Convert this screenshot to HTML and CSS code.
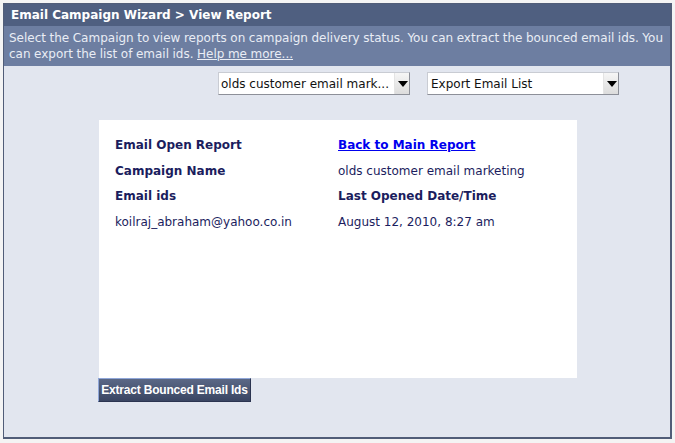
FILE: index.html
```html
<!DOCTYPE html>
<html lang="en">
<head>
    <meta charset="UTF-8">
    <title>Email Campaign Wizard - View Report</title>
    <link rel="stylesheet" href="styles.css">
</head>
<body>
    <div class="wizard">
        <!-- Title bar -->
        <div class="wizard-title">Email Campaign Wizard &gt; View Report</div>
        <div class="wizard-help">
            Select the Campaign to view reports on campaign delivery status. You can extract the bounced email ids. You can export the list of email ids. <a href="javascript:void(0)">Help me more...</a>
        </div>

        <div class="wizard-body">
            <div class="toolbar">
                <div class="select select-campaign">
                    <span>olds customer email mark...</span>
                    <span class="arrow"></span>
                </div>
                <div class="select select-export">
                    <span>Export Email List</span>
                    <span class="arrow"></span>
                </div>
            </div>

            <div class="report-panel">
                <div class="report-grid">
                    <div class="label">Email Open Report</div>
                    <div><a class="back-link" href="javascript:void(0)">Back to Main Report</a></div>
                    <div class="label">Campaign Name</div>
                    <div>olds customer email marketing</div>
                    <div class="label">Email ids</div>
                    <div class="label">Last Opened Date/Time</div>
                    <div>koilraj_abraham@yahoo.co.in</div>
                    <div>August 12, 2010, 8:27 am</div>
                </div>
            </div>
            <button class="extract-btn">Extract Bounced Email Ids</button>
        </div>
    </div>
</body>
</html>
```

FILE: styles.css
```css
* {
    box-sizing: border-box;
    margin: 0;
    padding: 0;
}

body {
    font-family: 'DejaVu Sans', Verdana, sans-serif;
    font-size: 12px;
    background-color: #f4f4f4;
    padding: 3px 3px 4px 3px;
}

.wizard {
    width: 669px;
    height: 436px;
    border: 1px solid #515d78;
    border-right-width: 2px;
    border-bottom-width: 2px;
    background-color: #e2e6ef;
    display: flex;
    flex-direction: column;
}

.wizard-title {
    background-color: #4f5f80;
    color: #fff;
    font-weight: bold;
    font-size: 12px;
    height: 22px;
    line-height: 22px;
    padding-left: 7px;
}

.wizard-help {
    background-color: #6d7ea1;
    color: #e9edf5;
    font-size: 12px;
    line-height: 16px;
    height: 40px;
    padding: 4px 4px 0 5px;
    word-spacing: -0.3px;
}

.wizard-help a {
    color: #e9edf5;
}

.wizard-body {
    flex: 1;
    padding: 6px 0 0 94px;
}

.toolbar {
    display: flex;
    gap: 17px;
    padding-left: 120px;
}

.select {
    height: 23px;
    background-color: #fff;
    border: 1px solid #c9ccd3;
    border-right-color: #8d9099;
    border-bottom-color: #8d9099;
    display: flex;
    align-items: center;
    justify-content: space-between;
    padding-left: 2px;
    color: #111;
    font-size: 12px;
}

.select-campaign {
    width: 192px;
}

.select-export {
    width: 192px;
}

.select-export span:first-child {
    padding-left: 1px;
}

.arrow {
    width: 15px;
    height: 21px;
    background: linear-gradient(#f6f6f6, #dcdcdc);
    border-left: 1px solid #e4e4e4;
    position: relative;
}

.arrow::after {
    content: "";
    position: absolute;
    left: 3px;
    top: 8px;
    border-left: 5px solid transparent;
    border-right: 5px solid transparent;
    border-top: 6px solid #000;
}

.report-panel {
    width: 478px;
    height: 258px;
    margin: 25px 0 0 1px;
    background-color: #fff;
    padding: 18px 16px;
}

.report-grid {
    display: grid;
    grid-template-columns: 223px 1fr;
    grid-auto-rows: 25.7px;
    color: #1b1d5e;
    font-size: 12px;
}

.label {
    font-weight: bold;
}

.back-link {
    color: #0000ee;
    font-weight: bold;
}

.extract-btn {
    margin-left: 0;
    width: 153px;
    height: 24px;
    border: 1px solid #8fa6d8;
    border-right-color: #2b3450;
    border-bottom-color: #2b3450;
    background: linear-gradient(#5b6886, #3a4562);
    color: #fff;
    font-family: 'Liberation Sans', Arial, sans-serif;
    font-weight: bold;
    font-size: 12px;
    letter-spacing: -0.2px;
}
```
